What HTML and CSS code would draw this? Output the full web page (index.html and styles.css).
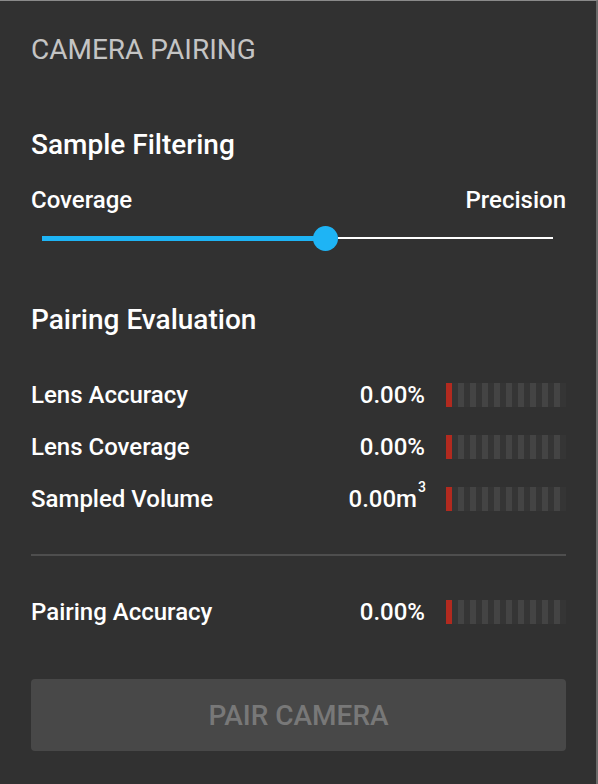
FILE: index.html
```html
<!DOCTYPE html>
<html>
<head>
<meta charset="utf-8">
<link rel="stylesheet" href="styles.css">
</head>
<body>
<div class="panel">
  <h1 class="title">CAMERA PAIRING</h1>

  <h2 class="section">Sample Filtering</h2>
  <div class="range-labels"><span>Coverage</span><span>Precision</span></div>
  <div class="slider">
    <div class="fill"></div>
    <div class="thumb"></div>
    <div class="rest"></div>
  </div>

  <h2 class="section eval">Pairing Evaluation</h2>
  <div class="metrics">
    <div class="row">
      <span class="label">Lens Accuracy</span>
      <span class="value">0.00%</span>
      <div class="meter"><i class="on"></i><i></i><i></i><i></i><i></i><i></i><i></i><i></i><i></i><i></i></div>
    </div>
    <div class="row">
      <span class="label">Lens Coverage</span>
      <span class="value">0.00%</span>
      <div class="meter"><i class="on"></i><i></i><i></i><i></i><i></i><i></i><i></i><i></i><i></i><i></i></div>
    </div>
    <div class="row">
      <span class="label">Sampled Volume</span>
      <span class="value">0.00m<sup>3</sup></span>
      <div class="meter"><i class="on"></i><i></i><i></i><i></i><i></i><i></i><i></i><i></i><i></i><i></i></div>
    </div>
  </div>
  <hr class="divider">
  <div class="row total">
    <span class="label">Pairing Accuracy</span>
    <span class="value">0.00%</span>
    <div class="meter"><i class="on"></i><i></i><i></i><i></i><i></i><i></i><i></i><i></i><i></i><i></i></div>
  </div>
  <button class="pair" disabled>PAIR CAMERA</button>
</div>
</body>
</html>
```
FILE: styles.css
```css
html, body {
  margin: 0;
  padding: 0;
  background: #313131;
}
body {
  font-family: Roboto, "Liberation Sans", sans-serif;
  color: #ffffff;
}
.panel {
  box-sizing: border-box;
  width: 598px;
  height: 784px;
  background: #313131;
  border-top: 1px solid #8a8a8a;
  border-right: 2px solid #6a6a6a;
  padding: 0 30px 0 31px;
  display: flex;
  flex-direction: column;
}
.title {
  margin: 33px 0 0;
  font-size: 28px;
  font-weight: 400;
  line-height: 32px;
  color: #c4c4c4;
}
.section {
  margin: 0;
  font-size: 28px;
  font-weight: 500;
  line-height: 32px;
}
.title + .section { margin-top: 63px; }
.range-labels {
  margin-top: 25px;
  display: flex;
  justify-content: space-between;
  font-size: 24px;
  font-weight: 500;
  line-height: 28px;
}
.slider {
  margin: 11px 13px 0 11px;
  height: 26px;
  display: flex;
  align-items: center;
}
.fill {
  width: 272px;
  height: 5px;
  background: #1eb4f5;
}
.thumb {
  width: 25px;
  height: 25px;
  border-radius: 50%;
  background: #1eb4f5;
  margin-left: -1px;
}
.rest {
  flex: 1;
  height: 2px;
  background: #ffffff;
}
.section.eval { margin-top: 53px; }
.metrics {
  margin-top: 47px;
  display: flex;
  flex-direction: column;
  gap: 28px;
}
.row {
  display: flex;
  align-items: center;
  height: 24px;
  font-size: 24px;
  font-weight: 500;
}
.label { flex: 1; }
.value { position: relative; }
.value sup {
  font-size: 14px;
  position: absolute;
  top: -6px;
  left: 100%;
  margin-left: 1px;
}
.row .value { margin-right: 21px; }
.row:nth-child(3) .value { margin-right: 29px; }
.meter {
  width: 120px;
  height: 24px;
  display: flex;
  background: #353535;
}
.meter i {
  width: 6px;
  height: 24px;
  margin-right: 6px;
  background: #444444;
}
.meter i.on { background: #b22a1f; }
.divider {
  margin: 43px 0 0;
  border: 0;
  height: 2px;
  background: #4e4e4e;
}
.row.total { margin-top: 44px; }
.pair {
  margin-top: 55px;
  height: 72px;
  border: 0;
  border-radius: 4px;
  background: #484848;
  color: #787878;
  font-family: Roboto, "Liberation Sans", sans-serif;
  font-size: 28px;
  font-weight: 500;
}
```
